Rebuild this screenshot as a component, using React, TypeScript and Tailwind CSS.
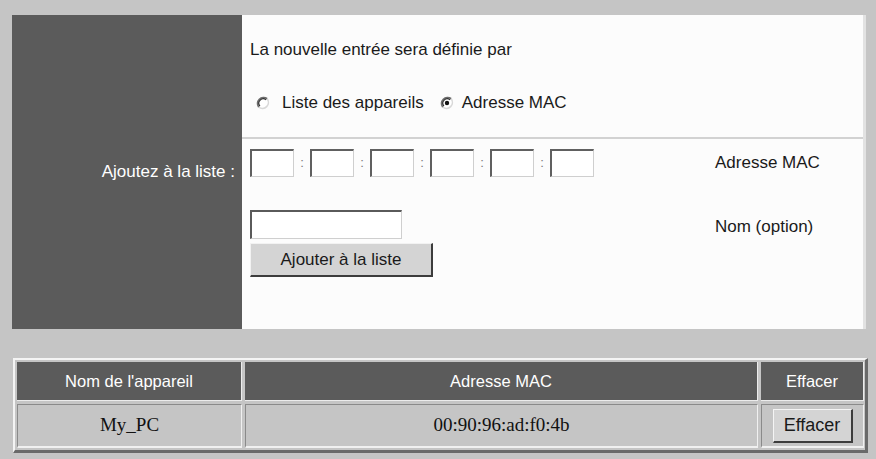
import React from "react";

function Radio({ checked }: { checked?: boolean }) {
  return (
    <svg width="14" height="14" viewBox="0 0 14 14" className="shrink-0">
      <circle cx="7" cy="7" r="6" fill="#ffffff" />
      <path d="M11.2 2.8 A6 6 0 0 0 2.8 11.2" fill="none" stroke="#6e6e6e" strokeWidth="1.8" />
      <path d="M10.1 3.9 A4.4 4.4 0 0 0 3.9 10.1" fill="none" stroke="#303030" strokeWidth="1.2" />
      <path d="M2.8 11.2 A6 6 0 0 0 11.2 2.8" fill="none" stroke="#d8d8d8" strokeWidth="1.6" />
      {checked && <circle cx="7" cy="7" r="2.2" fill="#111111" />}
    </svg>
  );
}

function MacBox() {
  return (
    <input
      type="text"
      className="w-[44px] h-[28px] bg-white border-t-2 border-l-2 border-b border-r border-t-[#606060] border-l-[#606060] border-b-[#cfcfcf] border-r-[#cfcfcf] outline-none"
    />
  );
}

function Colon() {
  return <span className="w-[16px] text-center text-[13px] text-[#7a7a7a] leading-[28px]">:</span>;
}

export default function App() {
  return (
    <div className="w-[876px] h-[459px] bg-[#c5c5c5] pt-[15px] pl-[12px] font-['Liberation_Sans',Arial,sans-serif] text-[#1a1a1a]">
      <div className="flex w-[854px] h-[314px]">
        <div className="w-[230px] bg-[#5b5b5b] flex items-center justify-end pr-[7px] text-white text-[17px] leading-[20px]">
          Ajoutez à la liste :
        </div>
        <div className="flex-1 bg-[#fcfcfc] flex flex-col border-r-[3px] border-r-[#e2e2e2]">
          <div className="h-[124px] pl-[8px] pt-[25px] border-b-2 border-b-[#d2d2d2] text-[17px] leading-[20px]">
            <div>La nouvelle entrée sera définie par</div>
            <div className="flex items-center mt-[33px] pl-[6px]">
              <Radio />
              <span className="ml-[12px]">Liste des appareils</span>
              <span className="ml-[16px]"><Radio checked /></span>
              <span className="ml-[8px]">Adresse MAC</span>
            </div>
          </div>
          <div className="flex-1 pl-[8px] pt-[10px] text-[17px] leading-[20px]">
            <div className="flex items-center">
              <div className="w-[465px] flex items-center">
                <MacBox />
                <Colon />
                <MacBox />
                <Colon />
                <MacBox />
                <Colon />
                <MacBox />
                <Colon />
                <MacBox />
                <Colon />
                <MacBox />
              </div>
              <div>Adresse MAC</div>
            </div>
            <div className="flex mt-[33px]">
              <div className="w-[465px] flex flex-col items-start">
                <input
                  type="text"
                  className="w-[152px] h-[29px] bg-white border-t-2 border-l-2 border-b border-r border-t-[#5a5a5a] border-l-[#5a5a5a] border-b-[#cfcfcf] border-r-[#cfcfcf] outline-none"
                />
                <button className="mt-[4px] w-[183px] h-[34px] bg-[#d4d4d4] border-t border-l border-b-2 border-r-2 border-t-[#f2f2f2] border-l-[#f2f2f2] border-b-[#3c3c3c] border-r-[#3c3c3c] text-[17px] text-[#1a1a1a] font-['Liberation_Sans',Arial,sans-serif]">
                  Ajouter à la liste
                </button>
              </div>
              <div className="pt-[7px]">Nom (option)</div>
            </div>
          </div>
        </div>
      </div>

      <div className="mt-[29px] ml-[1px] w-[855px] border-t-2 border-l-2 border-b-[3px] border-r-[3px] border-t-[#f4f4f4] border-l-[#f4f4f4] border-b-[#6a6a6a] border-r-[#6a6a6a] p-[2px]">
        <div className="grid grid-cols-[225px_513px_103px] grid-rows-[39px_44px] gap-[3px]">
          <div className="bg-[#5b5b5b] border-b border-r border-b-[#ececec] border-r-[#ececec] flex items-center justify-center text-white text-[16.5px]">
            Nom de l'appareil
          </div>
          <div className="bg-[#5b5b5b] border-b border-r border-b-[#ececec] border-r-[#ececec] flex items-center justify-center text-white text-[16.5px]">
            Adresse MAC
          </div>
          <div className="bg-[#5b5b5b] border-b border-r border-b-[#ececec] border-r-[#ececec] flex items-center justify-center text-white text-[16.5px]">
            Effacer
          </div>
          <div className="bg-[#c5c5c5] border-t border-l border-b-2 border-r border-t-[#8a8a8a] border-l-[#8a8a8a] border-b-[#f0f0f0] border-r-[#f0f0f0] flex items-center justify-center text-[19px] text-[#111] font-['Liberation_Serif','Times_New_Roman',serif]">
            My_PC
          </div>
          <div className="bg-[#c5c5c5] border-t border-l border-b-2 border-r border-t-[#8a8a8a] border-l-[#8a8a8a] border-b-[#f0f0f0] border-r-[#f0f0f0] flex items-center justify-center text-[19px] text-[#111] font-['Liberation_Serif','Times_New_Roman',serif]">
            00:90:96:ad:f0:4b
          </div>
          <div className="bg-[#c5c5c5] border-t border-l border-b-2 border-r border-t-[#8a8a8a] border-l-[#8a8a8a] border-b-[#f0f0f0] border-r-[#f0f0f0] flex items-center justify-center">
            <button className="w-[80px] h-[34px] bg-[#d4d4d4] border-t border-l border-b-2 border-r-2 border-t-[#f4f4f4] border-l-[#f4f4f4] border-b-[#3c3c3c] border-r-[#3c3c3c] text-[18px] text-[#1a1a1a] font-['Liberation_Sans',Arial,sans-serif]">
              Effacer
            </button>
          </div>
        </div>
      </div>
    </div>
  );
}
